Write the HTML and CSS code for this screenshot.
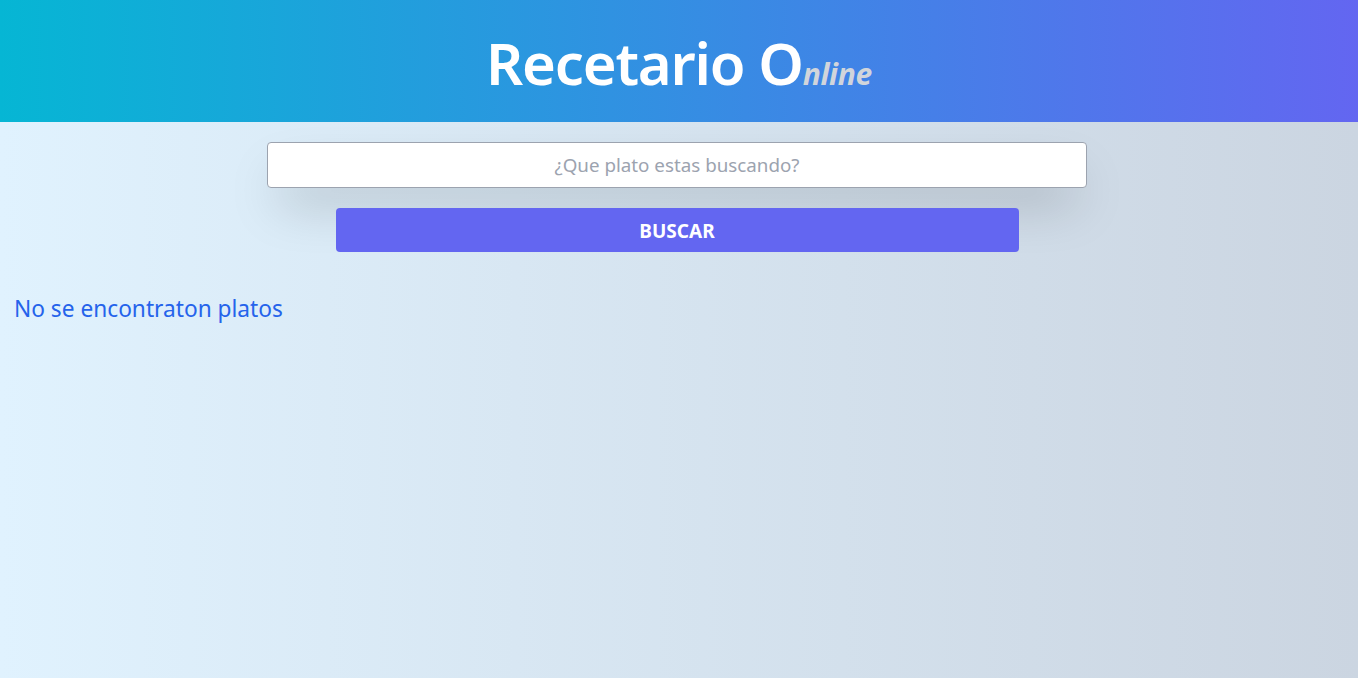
FILE: index.html
```html
<!DOCTYPE html>
<html lang="es">
<head>
<meta charset="utf-8">
<title>Recetario Online</title>
<link rel="stylesheet" href="styles.css">
</head>
<body>
<header class="header">
  <h1 class="title">Recetario O<span class="title-small">nline</span></h1>
</header>
<main class="main">
  <form class="search">
    <input class="search-input" type="text" placeholder="¿Que plato estas buscando?">
    <button class="search-button" type="button">BUSCAR</button>
  </form>
  <p class="empty">No se encontraton platos</p>
</main>
</body>
</html>
```
FILE: styles.css
```css
* { box-sizing: border-box; }
html, body { height: 100%; }
body {
  margin: 0;
  font-family: "Noto Sans", "Open Sans", sans-serif;
  background: linear-gradient(to right, #e0f2fe, #cbd5e1);
}
.header {
  height: 122px;
  display: flex;
  align-items: center;
  justify-content: center;
  background: linear-gradient(to right, #06b6d4, #6366f1);
}
.title {
  margin: 0;
  color: #ffffff;
  font-size: 58px;
  font-weight: 600;
  letter-spacing: -1.2px;
  line-height: 1;
  padding-top: 4px;
}
.title-small {
  font-size: 30px;
  font-style: italic;
  font-weight: 700;
  letter-spacing: -0.3px;
  color: #d1d5db;
}
.main {
  padding: 20px 14px;
}
.search {
  width: 820px;
  margin: 0 auto;
  display: flex;
  flex-direction: column;
  align-items: center;
  gap: 20px;
  position: relative;
  left: -2px;
}
.search-input {
  width: 100%;
  height: 46px;
  border: 1px solid #9ca3af;
  border-radius: 4px;
  background: #ffffff;
  text-align: center;
  font-family: inherit;
  font-size: 18.8px;
  color: #374151;
  box-shadow: 0 25px 50px -12px rgba(0, 0, 0, 0.25);
}
.search-input::placeholder { color: #9ca3af; }
.search-button {
  width: 683px;
  height: 44px;
  border: none;
  border-radius: 4px;
  background: #6366f1;
  color: #ffffff;
  font-family: inherit;
  font-size: 19px;
  font-weight: 700;
  padding-top: 2px;
}
.empty {
  margin: 41px 0 0;
  color: #2563eb;
  font-size: 22.7px;
  line-height: 32px;
}
```
